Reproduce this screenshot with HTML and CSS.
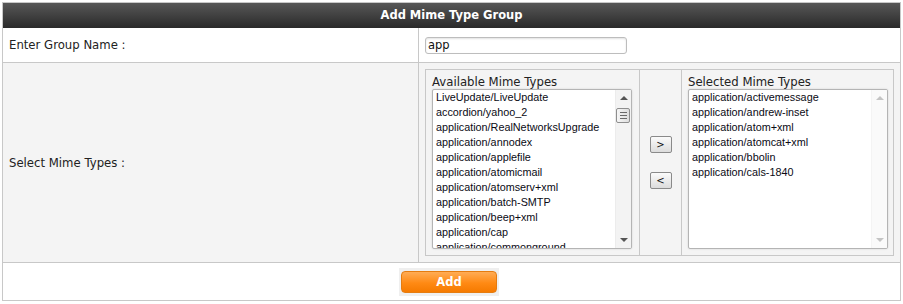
FILE: index.html
```html
<!DOCTYPE html>
<html lang="en">
<head>
    <meta charset="UTF-8">
    <title>Add Mime Type Group</title>
    <link rel="stylesheet" href="styles.css">
</head>
<body>
    <div class="panel">
        <div class="panel-title">Add Mime Type Group</div>

        <div class="form-row">
            <div class="form-label">Enter Group Name :</div>
            <div class="form-field">
                <input type="text" class="text-input" value="app">
            </div>
        </div>

        <div class="form-row shaded">
            <div class="form-label">Select Mime Types :</div>
            <div class="form-field">
                <div class="picker">
                    <div class="picker-col">
                        <div class="picker-label">Available Mime Types</div>
                        <div class="listbox">
                            <ul class="list-items">
                                <li>LiveUpdate/LiveUpdate</li>
                                <li>accordion/yahoo_2</li>
                                <li>application/RealNetworksUpgrade</li>
                                <li>application/annodex</li>
                                <li>application/applefile</li>
                                <li>application/atomicmail</li>
                                <li>application/atomserv+xml</li>
                                <li>application/batch-SMTP</li>
                                <li>application/beep+xml</li>
                                <li>application/cap</li>
                                <li>application/commonground</li>
                            </ul>
                            <div class="scrollbar">
                                <span class="arrow up"></span>
                                <span class="thumb"><i></i><i></i><i></i></span>
                                <span class="track"></span>
                                <span class="arrow down"></span>
                            </div>
                        </div>
                    </div>
                    <div class="picker-actions">
                        <button class="move-btn">&gt;</button>
                        <button class="move-btn">&lt;</button>
                    </div>
                    <div class="picker-col">
                        <div class="picker-label">Selected Mime Types</div>
                        <div class="listbox">
                            <ul class="list-items">
                                <li>application/activemessage</li>
                                <li>application/andrew-inset</li>
                                <li>application/atom+xml</li>
                                <li>application/atomcat+xml</li>
                                <li>application/bbolin</li>
                                <li>application/cals-1840</li>
                            </ul>
                            <div class="scrollbar disabled">
                                <span class="arrow up"></span>
                                <span class="track"></span>
                                <span class="arrow down"></span>
                            </div>
                        </div>
                    </div>
                </div>
            </div>
        </div>

        <div class="form-footer">
            <span class="btn-wrap"><button class="add-btn">Add</button></span>
        </div>
    </div>
</body>
</html>
```

FILE: styles.css
```css
/* Base */
* {
    margin: 0;
    padding: 0;
    box-sizing: border-box;
}

body {
    padding: 2px;
    background: #fff;
    font-family: Verdana, "DejaVu Sans", sans-serif;
    font-size: 11.7px;
    color: #222;
}

/* Panel */
.panel {
    width: 899px;
    border: 1px solid #c8c8c8;
}

.panel-title {
    height: 25px;
    line-height: 25px;
    text-align: center;
    font-size: 11.5px;
    font-weight: bold;
    color: #fff;
    background: linear-gradient(#575757, #2a2a2a);
}

/* Rows */
.form-row {
    display: grid;
    grid-template-columns: 416px 1fr;
    border-bottom: 1px solid #c8c8c8;
    background: #fff;
}

.form-row.shaded {
    background: #f4f4f4;
}

.form-label {
    display: flex;
    align-items: center;
    padding-left: 6px;
    border-right: 1px solid #c8c8c8;
}

.form-field {
    padding: 6px;
    min-height: 34px;
    display: flex;
    align-items: center;
}

.text-input {
    width: 202px;
    height: 17px;
    padding: 0 2px;
    border: 1px solid #bdbdbd;
    border-radius: 3px;
    box-shadow: inset 0 1px 2px rgba(0, 0, 0, 0.12);
    font-family: Verdana, "DejaVu Sans", sans-serif;
    font-size: 11.5px;
    color: #111;
    outline: none;
}

/* Mime type picker */
.picker {
    display: grid;
    grid-template-columns: 213px 42px 213px;
    width: 469px;
    border: 1px solid #c8c8c8;
}

.picker-col {
    padding: 6px;
}

.picker-col + .picker-actions,
.picker-actions + .picker-col {
    border-left: 1px solid #c8c8c8;
}

.picker-label {
    height: 13px;
    line-height: 13px;
    color: #222;
}

.listbox {
    display: flex;
    width: 200px;
    height: 160px;
    background: #fff;
    border: 1px solid #b4b4b4;
    border-radius: 2px;
    box-shadow: 0 0 2px rgba(0, 0, 0, 0.15);
    overflow: hidden;
}

.list-items {
    flex: 1;
    list-style: none;
    padding: 0 0 0 3px;
    font-family: "Liberation Sans", Arial, sans-serif;
    font-size: 10.8px;
    line-height: 15px;
    color: #0a0a14;
    white-space: nowrap;
    overflow: hidden;
}

/* Fake scrollbar */
.scrollbar {
    width: 16px;
    display: flex;
    flex-direction: column;
    background: #f3f3f3;
    border-left: 1px solid #ececec;
}

.scrollbar .track {
    flex: 1;
}

.arrow {
    height: 16px;
    display: flex;
    align-items: center;
    justify-content: center;
}

.arrow::after {
    content: '';
    border-left: 4px solid transparent;
    border-right: 4px solid transparent;
}

.arrow.up::after {
    border-bottom: 4px solid #555;
}

.arrow.down::after {
    border-top: 4px solid #555;
}

.scrollbar.disabled {
    background: #fafafa;
    border-left-color: #f4f4f4;
}

.scrollbar.disabled .arrow.up::after {
    border-bottom-color: #c4c4c4;
}

.scrollbar.disabled .arrow.down::after {
    border-top-color: #c4c4c4;
}

.thumb {
    height: 15px;
    margin: 2px 1px 0 0;
    border: 1px solid #8e8e8e;
    border-radius: 2px;
    background: linear-gradient(to right, #f6f6f6, #dedede);
    display: flex;
    flex-direction: column;
    align-items: center;
    justify-content: center;
    gap: 2px;
}

.thumb i {
    display: block;
    width: 7px;
    height: 1px;
    background: #6a6a6a;
}

.picker-actions {
    display: flex;
    flex-direction: column;
    align-items: center;
    justify-content: center;
    gap: 19px;
}

.move-btn {
    width: 22px;
    height: 17px;
    border: 1px solid #8a8a8a;
    border-radius: 2px;
    background: linear-gradient(#fbfbfb, #dcdcdc);
    font-family: "DejaVu Sans", sans-serif;
    font-size: 10px;
    line-height: 14px;
    color: #111;
    cursor: pointer;
}

/* Footer */
.form-footer {
    height: 37px;
    display: flex;
    align-items: center;
    justify-content: center;
    padding-right: 5px;
    background: #fff;
}

.btn-wrap {
    padding: 3px 2px;
    background: #efefef;
}

.add-btn {
    display: block;
    width: 96px;
    height: 22px;
    border: 1px solid #e57c10;
    border-radius: 4px;
    background: linear-gradient(#ffac55, #ff8a14 55%, #f57a00);
    color: #fff;
    font-family: Verdana, "DejaVu Sans", sans-serif;
    font-size: 11.5px;
    font-weight: bold;
    cursor: pointer;
}
```
